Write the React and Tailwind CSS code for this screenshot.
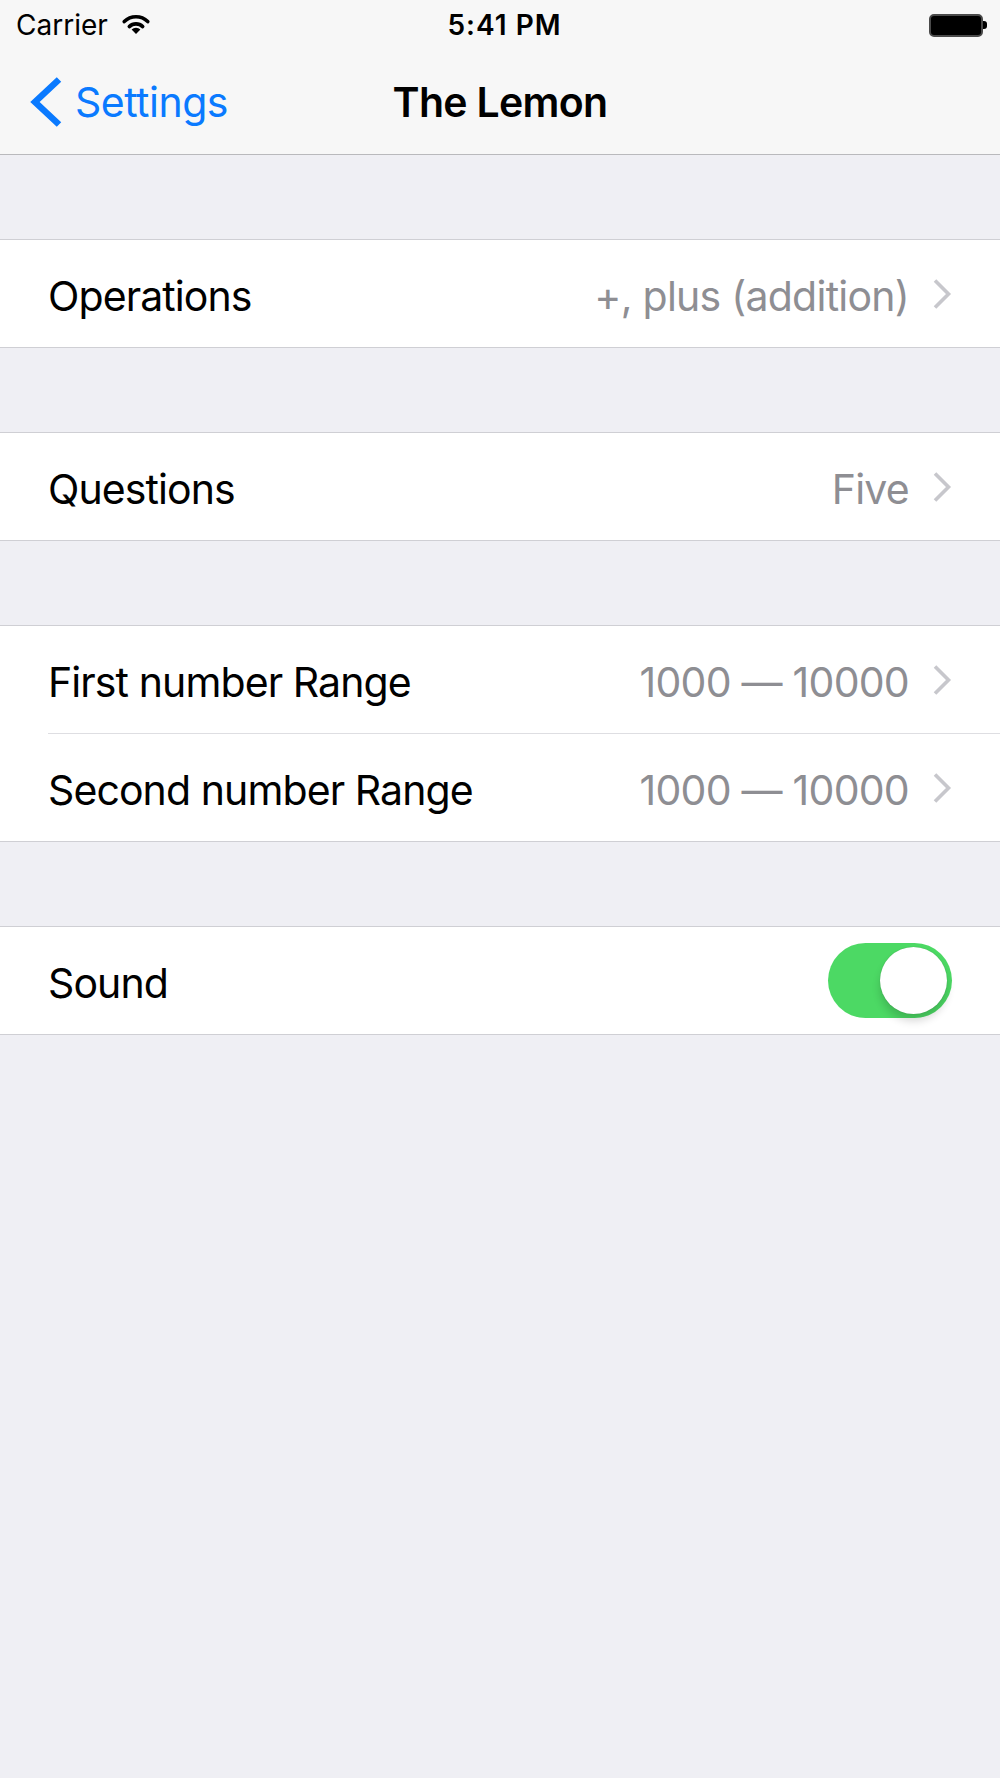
import React from "react";

function Chevron() {
  return (
    <svg width="20" height="32" viewBox="0 0 20 32" className="shrink-0">
      <polyline points="3,2.5 16.5,16 3,29.5" fill="none" stroke="#c7c7cc" strokeWidth="3.6" />
    </svg>
  );
}

function Row({ label, value }) {
  return (
    <div className="flex h-[107px] items-center bg-white pl-[48px] pr-[48px]">
      <span className="flex-1 pt-[5px] text-[41px] leading-none tracking-[-0.9px] text-black">{label}</span>
      <span className="mr-[23px] pt-[5px] text-[41px] leading-none tracking-[-0.75px] text-[#8e8e93]">{value}</span>
      <Chevron />
    </div>
  );
}

function Section({ children }) {
  return <div className="mt-[84px] border-y border-[#cfcfd4] bg-white">{children}</div>;
}

export default function App() {
  return (
    <div
      className="min-h-[1778px] w-full bg-[#efeff4]"
      style={{ fontFamily: "Inter, 'Noto Sans', sans-serif" }}
    >
      <div className="border-b border-[#b9b9bc] bg-[#f7f7f7]">
        {/* status bar */}
        <div className="grid h-[48px] grid-cols-[1fr_auto_1fr] items-center pt-[2px]">
          <div className="flex items-center pl-[16px]">
            <span className="text-[28px] leading-none text-black">Carrier</span>
            <svg width="28" height="22" viewBox="0 0 28 22" className="ml-[14px] mb-[2px]">
              <path d="M2.3 8.6 A16.5 16.5 0 0 1 25.7 8.6" fill="none" stroke="#000" strokeWidth="3.6" strokeLinecap="round" />
              <path d="M7.3 13.6 A9.5 9.5 0 0 1 20.7 13.6" fill="none" stroke="#000" strokeWidth="3.6" strokeLinecap="round" />
              <path d="M14 21 L9.6 16.6 A6.2 6.2 0 0 1 18.4 16.6 Z" fill="#000" />
            </svg>
          </div>
          <span className="pl-[9px] text-[28px] font-semibold leading-none tracking-[1px] text-black">5:41 PM</span>
          <div className="flex items-center justify-end pr-[13px]">
            <div className="h-[23px] w-[54px] rounded-[5px] border-[2px] border-[#4a4a4a] bg-black" />
            <div className="h-[8px] w-[4px] rounded-r-[3px] bg-black" />
          </div>
        </div>
        {/* nav bar */}
        <div className="grid h-[106px] grid-cols-[1fr_auto_1fr] items-center">
          <div className="flex items-center pl-[30px] pt-[2px]">
            <svg width="32" height="50" viewBox="0 0 32 50">
              <polyline points="29,2.5 5,25 29,47.5" fill="none" stroke="#0a7aff" strokeWidth="6.5" />
            </svg>
            <span className="ml-[13px] text-[41px] leading-none tracking-[-0.5px] text-[#0a7aff]">Settings</span>
          </div>
          <span className="pt-[2px] text-[41px] font-semibold leading-none tracking-[-0.7px] text-black">The Lemon</span>
          <div />
        </div>
      </div>

      <Section>
        <Row label="Operations" value="+, plus (addition)" />
      </Section>

      <Section>
        <Row label="Questions" value="Five" />
      </Section>

      <Section>
        <Row label="First number Range" value="1000 — 10000" />
        <div className="ml-[48px] h-px bg-[#dedee2]" />
        <Row label="Second number Range" value="1000 — 10000" />
      </Section>

      <Section>
        <div className="flex h-[107px] items-center bg-white pl-[48px] pr-[48px]">
          <span className="flex-1 pt-[5px] text-[41px] leading-none tracking-[-0.9px] text-black">Sound</span>
          <div className="flex h-[75px] w-[124px] items-center justify-end rounded-full bg-[#4cd964] pr-[5px]">
            <div className="h-[67px] w-[67px] rounded-full bg-white shadow-[0_7px_8px_rgba(0,0,0,0.16),0_0_1px_rgba(0,0,0,0.25)]" />
          </div>
        </div>
      </Section>
    </div>
  );
}
